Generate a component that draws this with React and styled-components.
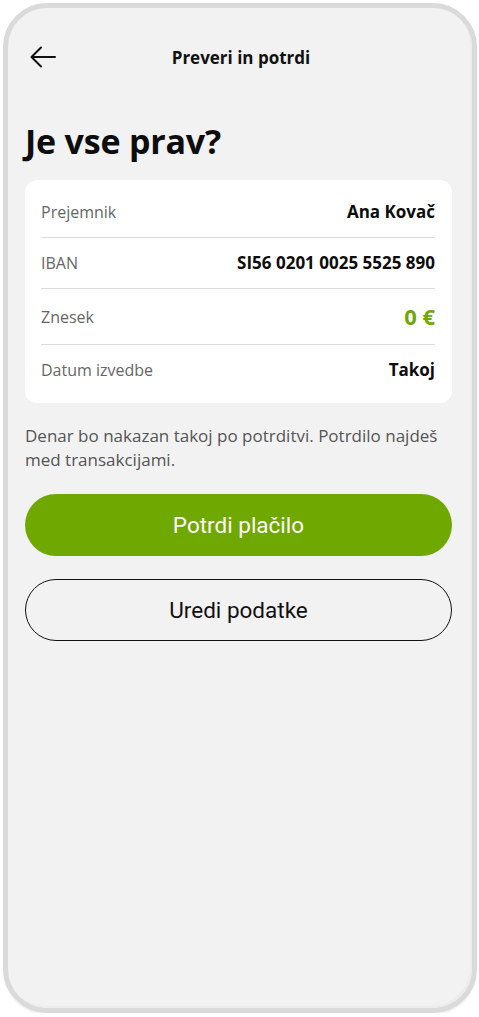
import React from 'react';
import styled, { createGlobalStyle } from 'styled-components';

const GlobalStyle = createGlobalStyle`
  html, body {
    margin: 0;
    padding: 0;
    background: #ffffff;
  }
  body {
    font-family: "Open Sans", "Noto Sans", sans-serif;
    color: #111;
  }
`;

const rows = [
  { label: 'Prejemnik', value: 'Ana Kovač' },
  { label: 'IBAN', value: 'SI56 0201 0025 5525 890' },
  { label: 'Znesek', value: '0 €', accent: true },
  { label: 'Datum izvedbe', value: 'Takoj' }
];

class App extends React.Component {
  render() {
    return (
      <React.Fragment>
        <GlobalStyle />
        <Phone>
          <Screen>
            {/* Top bar */}
            <TopBar>
              <BackButton aria-label="Nazaj">
                <svg width="26" height="22" viewBox="0 0 26 22" fill="none">
                  <path
                    d="M1.5 11H25M11 1.5L1.5 11L11 20.5"
                    stroke="#111"
                    strokeWidth="2"
                    strokeLinecap="round"
                    strokeLinejoin="round"
                  />
                </svg>
              </BackButton>
              <BarTitle>Preveri in potrdi</BarTitle>
              <span />
            </TopBar>

            <Heading>Je vse prav?</Heading>

            {/* Summary card */}
            <Card>
              {rows.map((row, i) => (
                <Row key={row.label} last={i === rows.length - 1}>
                  <Label>{row.label}</Label>
                  <Value accent={row.accent}>{row.value}</Value>
                </Row>
              ))}
            </Card>

            <Note>
              Denar bo nakazan takoj po potrditvi. Potrdilo najdeš med
              transakcijami.
            </Note>

            <Actions>
              <Button primary>Potrdi plačilo</Button>
              <Button>Uredi podatke</Button>
            </Actions>
          </Screen>
        </Phone>
      </React.Fragment>
    );
  }
}

export default App;

const Phone = styled.div`
  box-sizing: border-box;
  width: 474px;
  height: 1010px;
  margin: 3px 0 0 3px;
  border: 5px solid #dadada;
  border-radius: 44px;
  background: #f2f2f2;
  box-shadow: 0 2px 2px rgba(0, 0, 0, 0.06);
  overflow: hidden;
`;

const Screen = styled.div`
  box-sizing: border-box;
  height: 100%;
  padding: 33px 20px 0 17px;
  border-radius: 39px;
  box-shadow: inset -2px -2px 0 #ececec;
  display: flex;
  flex-direction: column;
`;

const TopBar = styled.header`
  display: grid;
  grid-template-columns: 1fr auto 1fr;
  align-items: center;
  height: 32px;
  padding-left: 5px;
`;

const BackButton = styled.button`
  justify-self: start;
  display: flex;
  align-items: center;
  padding: 0;
  border: 0;
  background: none;
  cursor: pointer;
`;

const BarTitle = styled.h2`
  margin: 0;
  font-size: 17px;
  font-weight: 700;
  color: #111;
`;

const Heading = styled.h1`
  margin: 48px 0 19px;
  font-size: 34px;
  line-height: 40px;
  font-weight: 700;
  color: #0d0d0d;
  letter-spacing: -0.2px;
`;

const Card = styled.section`
  background: #ffffff;
  border-radius: 12px;
  padding: 7px 17px 8px 16px;
`;

const Row = styled.div`
  display: flex;
  align-items: center;
  justify-content: space-between;
  padding: 14px 0;
  border-bottom: ${props => (props.last ? 'none' : '1.5px solid #dcdcdc')};
`;

const Label = styled.span`
  font-size: 16px;
  line-height: 22px;
  color: #666;
`;

const Value = styled.span`
  font-weight: 700;
  font-size: ${props => (props.accent ? '22px' : '17px')};
  line-height: ${props => (props.accent ? '27px' : '22px')};
  color: ${props => (props.accent ? '#6fa800' : '#0d0d0d')};
`;

const Note = styled.p`
  margin: 21px 0 23px;
  font-size: 17px;
  line-height: 23.5px;
  color: #555;
`;

const Actions = styled.div`
  display: flex;
  flex-direction: column;
  gap: 23px;
`;

const Button = styled.button`
  box-sizing: border-box;
  height: 62px;
  border-radius: 31px;
  font-family: Roboto, "Noto Sans", sans-serif;
  font-size: 22.5px;
  font-weight: 400;
  color: ${props => (props.primary ? '#ffffff' : '#111')};
  background: ${props => (props.primary ? '#6fa800' : 'transparent')};
  border: ${props => (props.primary ? 'none' : '1.5px solid #111')};
  cursor: pointer;
`;
